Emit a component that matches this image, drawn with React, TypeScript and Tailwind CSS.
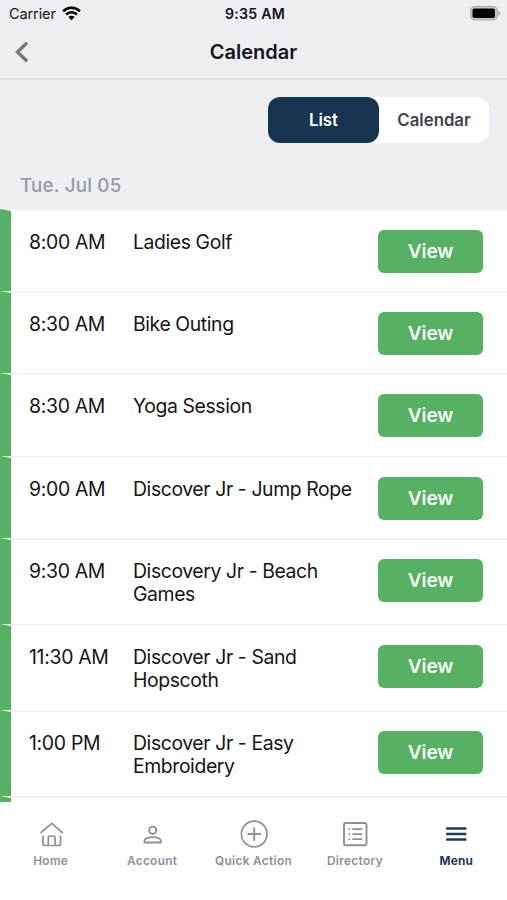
import type { ReactNode } from "react";

type Event = { time: string; title: string; height: string };

const events: Event[] = [
  { time: "8:00 AM", title: "Ladies Golf", height: "h-[82px]" },
  { time: "8:30 AM", title: "Bike Outing", height: "h-[82px]" },
  { time: "8:30 AM", title: "Yoga Session", height: "h-[83px]" },
  { time: "9:00 AM", title: "Discover Jr - Jump Rope", height: "h-[82px]" },
  { time: "9:30 AM", title: "Discovery Jr - Beach Games", height: "h-[86px]" },
  { time: "11:30 AM", title: "Discover Jr - Sand Hopscoth", height: "h-[86px]" },
  { time: "1:00 PM", title: "Discover Jr - Easy Embroidery", height: "h-[86px]" },
];

function EventRow({ time, title, height }: Event) {
  return (
    <div className={`flex shrink-0 items-start border-t-2 border-l-[11px] border-t-[#f3f3f4] border-l-[#56b162] bg-white pr-[24px] pl-[18px] ${height}`}>
      <div className="mt-[20px] w-[104px] shrink-0 text-[19.4px] leading-[23px] tracking-[-0.3px] whitespace-nowrap">{time}</div>
      <div className="mt-[20px] w-[228px] shrink-0 text-[19.4px] leading-[23px] tracking-[-0.4px]">{title}</div>
      <button className="mt-[19px] ml-auto h-[43px] w-[105px] rounded-[6px] bg-[#56b162] text-[19.2px] font-semibold tracking-[-0.1px] text-[#f6fff6]">View</button>
    </div>
  );
}

function Tab({ label, active, children }: { label: string; active?: boolean; children: ReactNode }) {
  return (
    <div className={`flex flex-1 flex-col items-center ${active ? "text-[#1c3a59]" : "text-[#8e9099]"}`}>
      <svg width="30" height="30" viewBox="0 0 30 30" fill="none" stroke="currentColor" strokeWidth="1.7" strokeLinecap="round" strokeLinejoin="round">
        {children}
      </svg>
      <span className={`mt-[5px] text-[11.8px] leading-[15px] whitespace-nowrap ${active ? "font-bold tracking-[0.2px]" : "font-semibold tracking-[0.35px]"}`}>{label}</span>
    </div>
  );
}

export default function App() {
  return (
    <div className="flex h-[900px] w-[507px] flex-col overflow-hidden bg-white font-['Inter','Liberation_Sans',sans-serif] text-[#141416]">
      <header className="h-[80px] shrink-0 border-b-2 border-[#e0e1e4] bg-[#edeef2]">
        <div className="grid h-[28px] grid-cols-3 items-center pr-[6px] pl-[9px]">
          <div className="flex items-center gap-[6px]">
            <span className="text-[14.5px] tracking-[-0.1px]">Carrier</span>
            <svg className="-mt-[2px]" width="19" height="15" viewBox="0 0 19 15" fill="none" stroke="#000" strokeWidth="2.5">
              <path d="M1.1 5.3a12 12 0 0 1 16.8 0" />
              <path d="M4.1 8.5a7.8 7.8 0 0 1 10.8 0" />
              <path d="M9.5 14.2 6.4 11.1a4.4 4.4 0 0 1 6.2 0Z" fill="#000" stroke="none" />
            </svg>
          </div>
          <div className="text-center text-[14.2px] font-semibold tracking-[0.2px] whitespace-nowrap">9:35 AM</div>
          <svg className="-mt-[2px] ml-auto" width="31" height="15" viewBox="0 0 31 15">
            <rect x="0.7" y="0.7" width="26.6" height="13.2" rx="4" fill="#c9cacd" stroke="#aeafb2" strokeWidth="1.2" />
            <rect x="2.5" y="2.6" width="22.5" height="9.4" rx="1.8" fill="#000" />
            <path d="M28.5 5c2.2.8 2.2 4 0 4.8Z" fill="#a5a6a9" />
          </svg>
        </div>
        <div className="grid h-[48px] grid-cols-[80px_1fr_80px] items-center">
          <svg className="ml-[14px]" width="16" height="22" viewBox="0 0 16 22" fill="none" stroke="#77787b" strokeWidth="3.4">
            <path d="M13 1.8 3.5 11 13 20.2" />
          </svg>
          <h1 className="text-center text-[20px] font-semibold">Calendar</h1>
        </div>
      </header>

      <section className="flex h-[129px] shrink-0 flex-col bg-[#edeef2] pt-[17px] pr-[18px] pl-[20px]">
        <div className="ml-auto flex h-[46px] w-[221px] rounded-[12px] bg-white text-[16.8px] font-semibold">
          <button className="w-[111px] rounded-[12px] bg-[#173551] pt-px text-white">List</button>
          <button className="flex-1 pt-px text-[#41424b]">Calendar</button>
        </div>
        <h2 className="mt-[31px] text-[18.8px] leading-[24px] font-medium tracking-[0.2px] text-[#959aa4]">Tue. Jul 05</h2>
      </section>

      <main className="flex h-[593px] shrink-0 flex-col overflow-hidden bg-white">
        {events.map((event) => (
          <EventRow key={event.time + event.title} {...event} />
        ))}
        <div className="h-[82px] shrink-0 border-t-2 border-l-[11px] border-t-[#f3f3f4] border-l-[#56b162]" />
      </main>

      <nav className="flex h-[98px] shrink-0 bg-white pt-[17px]">
        <Tab label="Home">
          <path d="M5 13.5 15.7 4.3 26.4 13.5" />
          <path d="M7 17v7.5q0 2 2 2h13.5q2 0 2-2V17M12.3 26.5v-7.5q0-2 2-2h2.8q2 0 2 2v7.5" />
        </Tab>
        <Tab label="Account">
          <circle cx="15.7" cy="11.2" r="3.6" strokeWidth="1.9" />
          <path d="M7.5 23.5V21.7c0-2.2 4-3.6 8.2-3.6s8.2 1.4 8.2 3.6v1.8Z" strokeWidth="1.9" />
        </Tab>
        <Tab label="Quick Action">
          <circle cx="15.2" cy="15" r="12.8" strokeWidth="1.7" />
          <path d="M15.2 9v12M9.2 15h12" strokeWidth="1.9" />
        </Tab>
        <Tab label="Directory">
          <rect x="4" y="4" width="22.5" height="22.2" rx="1.8" strokeWidth="1.9" />
          <path d="M13 10.2h8.5M13 15.2h8.5M13 20.2h8.5M9.2 10.2h.2M9.2 15.2h.2M9.2 20.2h.2" />
        </Tab>
        <Tab label="Menu" active>
          <path d="M5.2 9.5h20.2M5.2 15h20.2M5.2 20.5h20.2" strokeWidth="2.4" strokeLinecap="butt" />
        </Tab>
      </nav>
    </div>
  );
}
